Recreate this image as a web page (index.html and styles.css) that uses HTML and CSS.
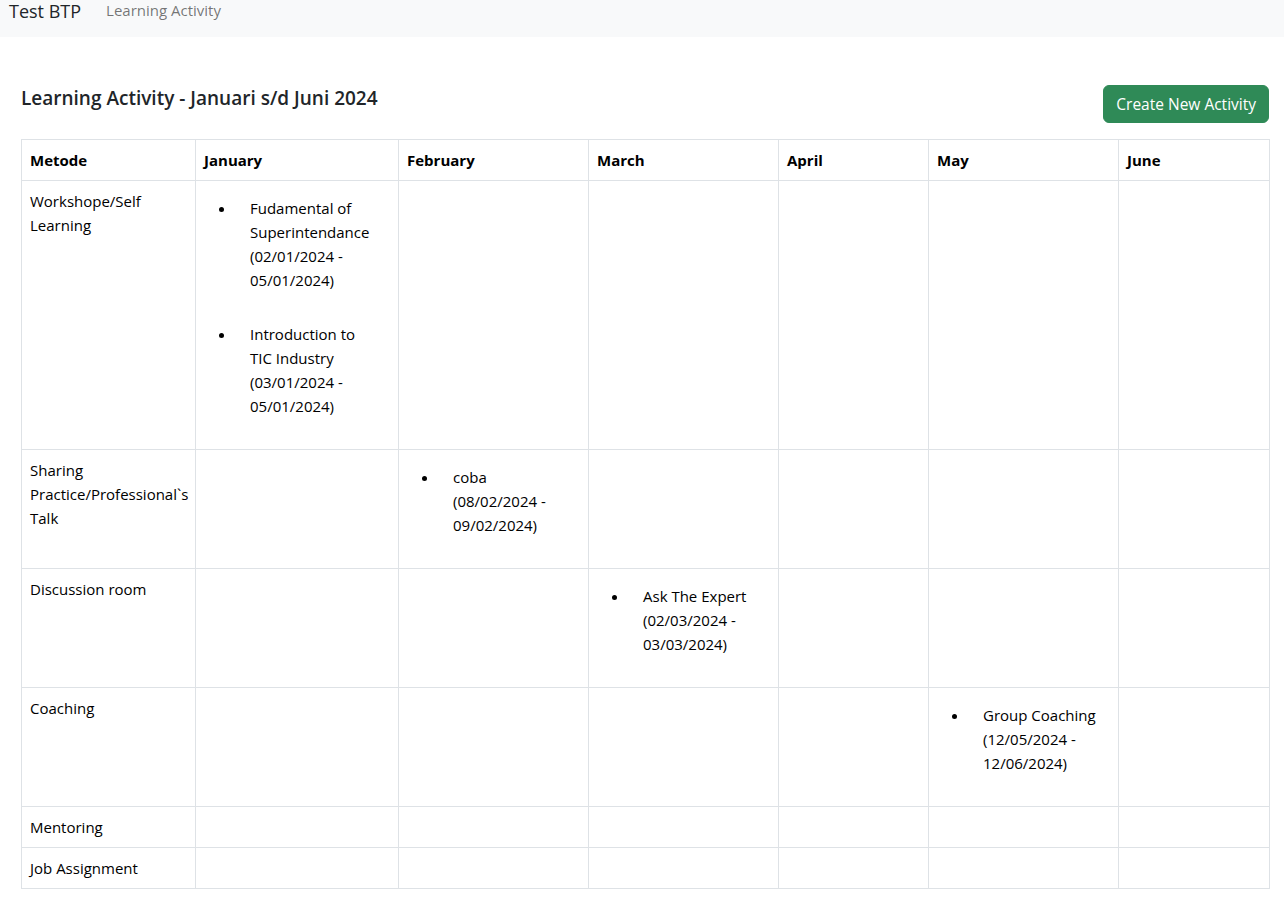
FILE: index.html
```html
<!DOCTYPE html>
<html lang="id">
<head>
<meta charset="utf-8">
<title>Learning Activity</title>
<link rel="stylesheet" href="styles.css">
</head>
<body>
<nav class="navbar">
  <span class="brand">Test BTP</span>
  <a class="nav-link" href="#">Learning Activity</a>
</nav>
<main class="container">
  <div class="page-head">
    <h5 class="title">Learning Activity - Januari s/d Juni 2024</h5>
    <button class="btn-success">Create New Activity</button>
  </div>
  <table class="grid">
    <colgroup>
      <col class="c-metode">
      <col class="c-jan">
      <col class="c-feb">
      <col class="c-mar">
      <col class="c-apr">
      <col class="c-may">
      <col class="c-jun">
    </colgroup>
    <thead>
      <tr><th>Metode</th><th>January</th><th>February</th><th>March</th><th>April</th><th>May</th><th>June</th></tr>
    </thead>
    <tbody>
      <tr class="tall">
        <td>Workshope/Self<br>Learning</td>
        <td>
          <ul class="acts">
            <li><p>Fudamental of<br>Superintendance<br>(02/01/2024 -<br>05/01/2024)</p></li>
            <li><p>Introduction to<br>TIC Industry<br>(03/01/2024 -<br>05/01/2024)</p></li>
          </ul>
        </td>
        <td></td><td></td><td></td><td></td><td></td>
      </tr>
      <tr>
        <td>Sharing<br>Practice/Professional`s<br>Talk</td>
        <td></td>
        <td><ul class="acts"><li><p>coba<br>(08/02/2024 -<br>09/02/2024)</p></li></ul></td>
        <td></td><td></td><td></td><td></td>
      </tr>
      <tr>
        <td>Discussion room</td>
        <td></td><td></td>
        <td><ul class="acts"><li><p>Ask The Expert<br>(02/03/2024 -<br>03/03/2024)</p></li></ul></td>
        <td></td><td></td><td></td>
      </tr>
      <tr>
        <td>Coaching</td>
        <td></td><td></td><td></td><td></td>
        <td><ul class="acts"><li><p>Group Coaching<br>(12/05/2024 -<br>12/06/2024)</p></li></ul></td>
        <td></td>
      </tr>
      <tr><td>Mentoring</td><td></td><td></td><td></td><td></td><td></td><td></td></tr>
      <tr><td>Job Assignment</td><td></td><td></td><td></td><td></td><td></td><td></td></tr>
    </tbody>
  </table>
</main>
</body>
</html>
```

FILE: styles.css
```css
* { box-sizing: border-box; }

html, body {
  margin: 0;
  padding: 0;
  background: #fff;
}

body {
  font-family: "Segoe UI", "Open Sans", "Noto Sans", sans-serif;
  font-size: 15px;
  line-height: 24px;
  color: #212529;
}

.navbar {
  height: 37px;
  background: #f8f9fa;
  display: flex;
  align-items: flex-start;
  padding: 0 0 0 9px;
}

.brand {
  font-size: 18px;
  line-height: 22px;
  color: #212529;
  margin-right: 25px;
}

.nav-link {
  font-size: 15px;
  line-height: 21px;
  color: rgba(0, 0, 0, 0.55);
  text-decoration: none;
}

.container {
  padding: 48px 15px 0 21px;
}

.page-head {
  display: flex;
  justify-content: space-between;
  align-items: flex-start;
  margin-bottom: 16px;
}

.title {
  margin: 1px 0 0;
  font-size: 19px;
  line-height: 24px;
  font-weight: 600;
  color: #212529;
}

.btn-success {
  font-family: inherit;
  font-size: 15.5px;
  line-height: 24px;
  color: #fff;
  background: #2f8a57;
  border: 1px solid #2f8a57;
  border-radius: 6px;
  padding: 6px 12px;
  height: 38px;
}

.grid {
  width: 1248px;
  border-collapse: collapse;
  table-layout: fixed;
  vertical-align: top;
}

.c-metode { width: 174px; }
.c-jan { width: 203px; }
.c-feb { width: 190px; }
.c-mar { width: 190px; }
.c-apr { width: 150px; }
.c-may { width: 190px; }
.c-jun { width: 151px; }

.grid th,
.grid td {
  border: 1px solid #dee2e6;
  padding: 8px;
  text-align: left;
  vertical-align: top;
  white-space: nowrap;
}

.grid th {
  font-weight: 700;
  color: #000;
}

.grid td {
  color: #000;
  height: 41px;
}

.grid tbody tr { height: 119px; }
.grid tbody tr.tall { height: 269px; }
.grid tbody tr:nth-child(5),
.grid tbody tr:nth-child(6) { height: 41px; }

.acts {
  margin: 0;
  padding-left: 32px;
}

.acts li {
  padding: 7px 0 7px 14px;
}

.acts p {
  margin: 0 0 16px;
}
```
